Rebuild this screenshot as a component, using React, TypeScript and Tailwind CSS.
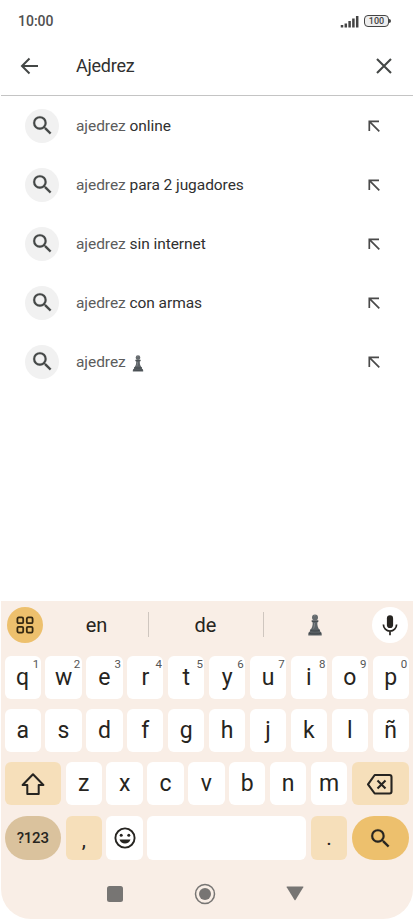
import React from "react";

const suggestions = ["online", "para 2 jugadores", "sin internet", "con armas", ""];
const topRow = ["q", "w", "e", "r", "t", "y", "u", "i", "o", "p"];
const homeRow = ["a", "s", "d", "f", "g", "h", "j", "k", "l", "ñ"];
const bottomRow = ["z", "x", "c", "v", "b", "n", "m"];

const keyClass = "relative flex items-center justify-center rounded-[6px] bg-white";

function SearchIcon({ className }: { className: string }) {
  return (
    <svg viewBox="0 0 24 24" className={className} fill="currentColor" stroke="currentColor" strokeWidth=".15">
      <path d="M15.5 14h-.79l-.28-.27A6.471 6.471 0 0 0 16 9.5 6.5 6.5 0 1 0 9.5 16c1.61 0 3.09-.59 4.23-1.57l.27.28v.79l5 4.99L20.49 19l-4.99-5zm-6 0C7.01 14 5 11.99 5 9.5S7.01 5 9.5 5 14 7.01 14 9.5 11.99 14 9.5 14z" />
    </svg>
  );
}

function Pawn({ className }: { className: string }) {
  return (
    <svg viewBox="0 0 14 22" className={className}>
      <circle cx="7" cy="3.4" r="3" fill="#666b6e" />
      <path d="M3.6 6.2h6.800v1.600L9.300 8.500c0 3 .5 5.400 2.300 7.500H2.400C4.200 13.900 4.700 11.500 4.700 8.500l-1.100-.7z" fill="#5d6367" />
      <path d="M2.200 15.500h9.600l.5 2.200c.9.400 1.400 1.100 1.400 2.100v1.700H.3v-1.700c0-1 .5-1.700 1.400-2.100z" fill="#585e62" />
      <path d="M4 7.300h6M2.500 16.300c2 .9 7 .9 9 0M1 19.200c3 1 9 1 12 0" stroke="#3c4246" strokeWidth=".8" fill="none" />
      <path d="M6 2.200c.3-.5.8-.7 1.300-.6M6.500 9c0 2.400-.3 4-1 5.500" stroke="#92979a" strokeWidth=".7" fill="none" />
    </svg>
  );
}

function StatusBar() {
  return (
    <div className="flex h-[42px] items-center justify-between pl-[18px] pr-[23px]">
      <span className="text-[14px] font-medium text-[#505050]">10:00</span>
      <div className="flex items-center gap-[5px]">
        <svg viewBox="0 0 19 13" className="h-[13px] w-[19px]" stroke="#444" strokeWidth="2.500">
          <path d="M2 12.500V10M5.800 12.500V8.500M9.600 12.500V6M13.400 12.500V3.500M17.200 12.500V1" />
        </svg>
        <div className="flex items-center">
          <div className="flex h-[12px] w-[25px] items-center justify-center rounded-[4px] border border-[#444] bg-[#eee] text-[9px] font-medium leading-none text-[#444]">
            100
          </div>
          <div className="h-[4px] w-[2px] rounded-r-sm bg-[#444]" />
        </div>
      </div>
    </div>
  );
}

function SearchBar() {
  return (
    <div className="mx-px flex h-[54px] items-center border-b border-[#c4c4c4] pb-[6px] pl-[17px] pr-[17px] text-[#444746]">
      <svg viewBox="0 0 24 24" className="h-[24px] w-[24px]" fill="none" stroke="currentColor" strokeWidth="2">
        <path d="M20 12H4.500M11.500 4.500L4 12l7.500 7.500" />
      </svg>
      <span className="ml-[34px] flex-1 pb-px text-[18px] tracking-[-0.25px] text-[#303030]">Ajedrez</span>
      <svg viewBox="0 0 24 24" className="h-[24px] w-[24px]" fill="none" stroke="currentColor" strokeWidth="2.100">
        <path d="M5 5l14 14M19 5L5 19" />
      </svg>
    </div>
  );
}

function SuggestionRow({ text }: { text: string }) {
  return (
    <div className="flex h-[59px] items-center pl-[25px] pr-[32px]">
      <div className="flex h-[34px] w-[34px] items-center justify-center rounded-full bg-[#f1f1f1]">
        <SearchIcon className="h-[25px] w-[25px] text-[#444746]" />
      </div>
      <div className="ml-[17px] flex flex-1 items-center whitespace-pre pt-[3px] text-[15.5px] tracking-[-0.06px] text-[#5c5c5c]">
        <span>ajedrez </span>
        {text ? <span className="text-[#303030]">{text}</span> : <Pawn className="ml-[3px] h-[17px] w-[12px]" />}
      </div>
      <svg viewBox="0 0 16 16" className="h-[16px] w-[16px]" fill="none" stroke="#4a4a4a" strokeWidth="1.700">
        <path d="M13 3.300H3.300V13M3.300 3.300l10 10" />
      </svg>
    </div>
  );
}

function Letter({ children }: { children: React.ReactNode }) {
  return <span className="text-[23px] leading-none">{children}</span>;
}

function Keyboard() {
  return (
    <div className="mx-px flex h-[318px] flex-col rounded-b-[30px] bg-[#f9eee6] pl-[3.500px] pr-[4.200px] text-[#262420]">
      <div className="flex h-[47px] items-center pl-[2px]">
        <div className="flex h-[36px] w-[36px] items-center justify-center rounded-full bg-[#edc06d]">
          <svg viewBox="0 0 18 18" className="h-[18px] w-[18px]" fill="none" stroke="#352811" strokeWidth="1.800">
            <rect x="1.400" y="1.400" width="5.800" height="5.800" rx="1.300" />
            <rect x="10.800" y="1.400" width="5.800" height="5.800" rx="1.300" />
            <rect x="1.400" y="10.800" width="5.800" height="5.800" rx="1.300" />
            <rect x="10.800" y="10.800" width="5.800" height="5.800" rx="1.300" />
          </svg>
        </div>
        <div className="flex w-[105px] justify-center pl-[3px] text-[20px]">en</div>
        <div className="h-[25px] w-px bg-[#cfc6bf]" />
        <div className="flex w-[114px] justify-center text-[20px]">de</div>
        <div className="h-[25px] w-px bg-[#cfc6bf]" />
        <div className="flex w-[108px] justify-center pr-[5px]">
          <Pawn className="h-[22px] w-[14px]" />
        </div>
        <div className="flex h-[36px] w-[36px] items-center justify-center rounded-full bg-white">
          <svg viewBox="0 0 18 22" className="h-[22px] w-[18px]">
            <rect x="5.900" y="1.300" width="6.200" height="12.700" rx="3.100" fill="currentColor" />
            <path d="M2.400 10.500a6.600 6.600 0 0 0 13.200 0M9 17.100v4.100" fill="none" stroke="currentColor" strokeWidth="1.700" />
          </svg>
        </div>
      </div>

      <div className="mt-[8px] grid h-[43px] grid-cols-10 gap-[4.600px]">
        {topRow.map((letter, i) => (
          <div key={letter} className={keyClass}>
            <Letter>{letter}</Letter>
            <span className="absolute right-[1.500px] top-[3px] text-[11.500px] leading-none text-[#555]">{(i + 1) % 10}</span>
          </div>
        ))}
      </div>

      <div className="mt-[10px] grid h-[43px] grid-cols-10 gap-[4.600px]">
        {homeRow.map((letter) => (
          <div key={letter} className={keyClass}>
            <Letter>{letter}</Letter>
          </div>
        ))}
      </div>

      <div className="mt-[10px] flex h-[43px] gap-[4.600px]">
        <div className="flex w-[56.500px] items-center justify-center rounded-[6px] bg-[#f6dfba]">
          <svg viewBox="0 0 26 24" className="h-[24px] w-[26px]" fill="none" stroke="currentColor" strokeWidth="2" strokeLinejoin="round">
            <path d="M13 2.200L2.600 13h4.700v9h11.400v-9h4.700z" />
          </svg>
        </div>
        {bottomRow.map((letter) => (
          <div key={letter} className={keyClass + " flex-1"}>
            <Letter>{letter}</Letter>
          </div>
        ))}
        <div className="flex w-[57px] items-center justify-center rounded-[6px] bg-[#f6dfba]">
          <svg viewBox="0 0 28 24" className="h-[24px] w-[28px]" fill="none" stroke="currentColor" strokeWidth="2.100" strokeLinejoin="round">
            <path d="M8.700 3h14.800a2 2 0 0 1 2 2v14.500a2 2 0 0 1-2 2H8.700L2 12.300z" />
            <path d="M11.500 8.400l8 8M19.500 8.400l-8 8" />
          </svg>
        </div>
      </div>

      <div className="mt-[11px] flex h-[44px] gap-[4.600px]">
        <div className="flex w-[56.500px] items-center justify-center rounded-full bg-[#dac29d] text-[15px] font-medium tracking-[-0.2px]">?123</div>
        <div className="flex w-[36.300px] items-center justify-center rounded-[6px] bg-[#f6dfba] pt-[4px] text-[21px] leading-none">,</div>
        <div className="flex w-[36.300px] items-center justify-center rounded-[6px] bg-white">
          <svg viewBox="0 0 24 24" className="h-[24px] w-[24px]" fill="currentColor">
            <circle cx="12" cy="12" r="9.600" fill="none" stroke="currentColor" strokeWidth="1.900" />
            <circle cx="8.200" cy="9.200" r="1.500" />
            <circle cx="15.800" cy="9.200" r="1.500" />
            <path d="M6.500 13.600h11c-.8 2.600-2.900 4-5.500 4s-4.700-1.400-5.500-4z" />
          </svg>
        </div>
        <div className="flex-1 rounded-[6px] bg-white" />
        <div className="flex w-[36.300px] items-center justify-center rounded-[6px] bg-[#f6dfba] text-[21px] leading-none">.</div>
        <div className="flex w-[57px] items-center justify-center rounded-full bg-[#edc06d]">
          <SearchIcon className="h-[25px] w-[25px]" />
        </div>
      </div>

      <div className="flex flex-1 items-center pb-[9px] pl-[102.500px] pt-[17px] text-[#777573]">
        <div className="h-[16px] w-[16px] rounded-[2.500px] bg-current" />
        <svg viewBox="0 0 22 22" className="ml-[71px] h-[22px] w-[22px]">
          <circle cx="11" cy="11" r="9.500" fill="none" stroke="currentColor" strokeWidth="1.500" />
          <circle cx="11" cy="11" r="6" fill="currentColor" />
        </svg>
        <svg viewBox="0 0 18 15" className="ml-[70px] h-[15px] w-[18px]" fill="currentColor">
          <path d="M1 .5h16q.7 0 .3.700L9.500 14q-.5.700-1 0L.7 1.200Q.3.500 1 .5z" />
        </svg>
      </div>
    </div>
  );
}

export default function App() {
  return (
    <div className="flex h-[920px] w-[414px] flex-col overflow-hidden bg-white font-['Roboto',sans-serif]">
      <StatusBar />
      <SearchBar />
      <div className="flex h-[505px] flex-col">
        {suggestions.map((text, i) => (
          <SuggestionRow key={i} text={text} />
        ))}
      </div>
      <Keyboard />
    </div>
  );
}
